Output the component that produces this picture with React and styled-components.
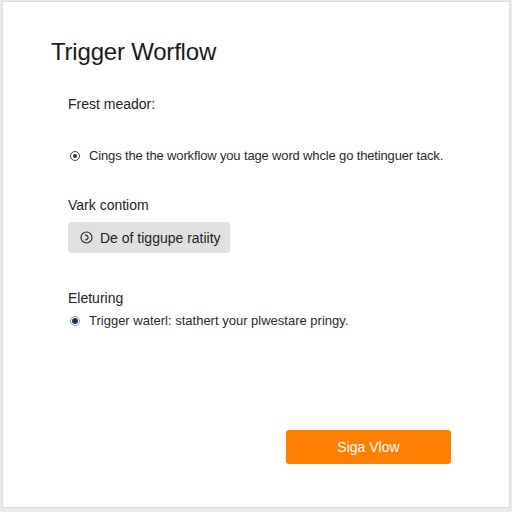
import React from 'react';
import styled, { createGlobalStyle } from 'styled-components';

const GlobalStyle = createGlobalStyle`
  html, body {
    margin: 0;
    padding: 0;
    background: #e9eaec;
  }
  body {
    font-family: "Liberation Sans", Arial, sans-serif;
    color: #1e1e1e;
  }
`;

const Page = styled.div`
  width: 512px;
  height: 512px;
  box-sizing: border-box;
  padding: 1px 2px 4px 2px;
`;

const Card = styled.div`
  height: 100%;
  box-sizing: border-box;
  background: #ffffff;
  border: 1px solid #dcdde0;
  padding: 36px 58px 0 48px;
  display: flex;
  flex-direction: column;
`;

const Title = styled.h1`
  margin: 0;
  font-size: 24px;
  font-weight: 400;
  color: #1a1a1a;
  letter-spacing: -0.2px;
`;

const Body = styled.div`
  padding-left: 17px;
  display: flex;
  flex-direction: column;
`;

const Label = styled.div`
  font-size: 14px;
  color: #222;
  margin-top: ${(p) => p.$top}px;
`;

const OptionRow = styled.div`
  display: flex;
  align-items: center;
  gap: 9px;
  margin-top: ${(p) => p.$top}px;
  padding-left: 2px;
  font-size: 13px;
  letter-spacing: ${(p) => p.$tight ? -0.15 : 0}px;
  white-space: nowrap;
  color: #2a2a2a;
`;

const Radio = styled.span`
  width: 8px;
  height: 8px;
  border-radius: 50%;
  border: 1px solid ${(p) => (p.$checked ? '#8a9aae' : '#444')};
  display: flex;
  align-items: center;
  justify-content: center;
  flex-shrink: 0;
  &::after {
    content: '';
    width: ${(p) => (p.$checked ? 6 : 4)}px;
    height: ${(p) => (p.$checked ? 6 : 4)}px;
    border-radius: 50%;
    background: ${(p) => (p.$checked ? '#1d3552' : '#333')};
  }
`;

const GrayButton = styled.div`
  margin-top: 9px;
  width: 162px;
  height: 31px;
  box-sizing: border-box;
  border-radius: 3px;
  background: #e0e0e0;
  display: flex;
  align-items: center;
  gap: 7px;
  padding-left: 12px;
  font-size: 14px;
  color: #222;
`;

const ClockIcon = () => (
  <svg width="13" height="13" viewBox="0 0 13 13">
    <circle cx="6.5" cy="6.5" r="5.5" fill="none" stroke="#222" strokeWidth="1.1" />
    <path d="M5 4.2 A2.4 2.4 0 1 1 5 8.8" fill="none" stroke="#222" strokeWidth="1.1" />
  </svg>
);

const Footer = styled.div`
  margin-top: auto;
  margin-bottom: 43px;
  display: flex;
  justify-content: flex-end;
`;

const PrimaryButton = styled.div`
  width: 165px;
  height: 34px;
  border-radius: 3px;
  background: #ff7f00;
  color: #fff;
  font-size: 14px;
  display: flex;
  align-items: center;
  justify-content: center;
`;

export default function App() {
  return (
    <>
      <GlobalStyle />
      <Page>
        <Card>
          <Title>Trigger Worflow</Title>
          <Body>
            <Label $top={30}>Frest meador:</Label>
            <OptionRow $top={36} $tight>
              <Radio />
              Cings the the workflow you tage word whcle go thetinguer tack.
            </OptionRow>
            <Label $top={34}>Vark contiom</Label>
            <GrayButton>
              <ClockIcon />
              De of tiggupe ratiity
            </GrayButton>
            <Label $top={37}>Eleturing</Label>
            <OptionRow $top={7}>
              <Radio $checked />
              Trigger waterl: stathert your plwestare pringy.
            </OptionRow>
          </Body>
          <Footer>
            <PrimaryButton>Siga Vlow</PrimaryButton>
          </Footer>
        </Card>
      </Page>
    </>
  );
}
